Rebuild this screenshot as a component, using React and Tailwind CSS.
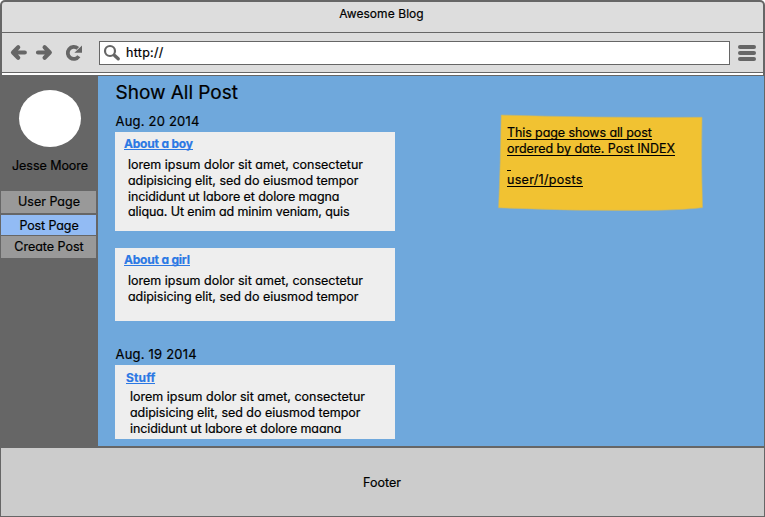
const LOREM = [
  { text: "lorem ipsum dolor sit amet, consectetur", tracking: "tracking-[0.01px]" },
  { text: "adipisicing elit, sed do eiusmod tempor", tracking: "tracking-[-0.03px]" },
  { text: "incididunt ut labore et dolore magna", tracking: "tracking-[-0.09px]" },
  { text: "aliqua. Ut enim ad minim veniam, quis", tracking: "tracking-[-0.1px]" },
];

function PostLink({ children, className }) {
  return (
    <div className="flex">
      <a className={`block h-[18px] whitespace-pre border-b border-[#2b78e4] text-[12px] leading-[23px] font-bold text-[#2b78e4] ${className}`}>
        {children}
      </a>
    </div>
  );
}

function Excerpt({ lines, className }) {
  return (
    <div className={`overflow-hidden ${className}`}>
      {lines.map(({ text, tracking }) => (
        <div key={text} className={`h-[15.75px] whitespace-pre leading-[16px] ${tracking}`}>{text}</div>
      ))}
    </div>
  );
}

function NoteLine({ children, className }) {
  return (
    <div className="flex">
      <span className={`block whitespace-pre border-b border-black leading-[18px] ${className}`}>{children}</span>
    </div>
  );
}

function Toolbar() {
  return (
    <div className="flex h-[40px] items-start border-b border-[#666]">
      <svg className="mt-[9px] ml-[6px] h-[22px] w-[78px] shrink-0" viewBox="0 0 78 22" fill="none" stroke="#666" strokeLinecap="round" strokeLinejoin="round">
        <path strokeWidth="4.200" d="M10.200 5.200 5 10.500 10.200 15.800M5.500 10.500h11.300" />
        <path strokeWidth="4.200" d="M36.600 5.200 41.800 10.500 36.600 15.800M41.300 10.500H30" />
        <path strokeWidth="3.800" strokeLinecap="butt" d="M70.800 14.200A6 6 0 1 1 69.800 6.400" />
        <path fill="#666" stroke="none" d="M74 3.600v7.200h-7.600z" />
      </svg>
      <div className="mt-2 ml-[13px] flex h-[24px] w-[631px] items-start border border-[#666] bg-white">
        <svg className="mt-[2px] ml-[3px] h-[18px] w-[18px]" viewBox="0 0 18 18" fill="none" stroke="#666">
          <circle cx="7" cy="7" r="5" strokeWidth="2.2" />
          <path strokeWidth="3.4" strokeLinecap="round" d="m11.6 11.6 3.6 3.2" />
        </svg>
        <span className="ml-[5px] leading-[22px] tracking-[0.3px]">http://</span>
      </div>
      <div className="mt-3 ml-2 flex w-[18px] flex-col gap-[2px]">
        <div className="h-1 rounded-full bg-[#666]" />
        <div className="h-1 rounded-full bg-[#666]" />
        <div className="h-1 rounded-full bg-[#666]" />
      </div>
    </div>
  );
}

function Sidebar() {
  return (
    <aside className="flex w-[98px] flex-col bg-[#666] pl-px">
      <div className="mt-[14px] ml-[18px] h-[57px] w-[62px] rounded-[50%] bg-white" />
      <div className="mt-[11px] h-4 w-[98px] text-center leading-4 tracking-[-0.05px] whitespace-pre">Jesse Moore</div>
      <nav className="mt-[17px] flex w-[95px] flex-col text-center">
        <a className="h-[22px] bg-[#999] pl-px leading-[22px]">User Page</a>
        <a className="mt-[2px] h-5 bg-[#92bbf4] pl-px leading-[22px] tracking-[-0.1px]">Post Page</a>
        <a className="mt-px h-[22px] bg-[#999] pl-px leading-[22px]">Create Post</a>
      </nav>
    </aside>
  );
}

function Note() {
  return (
    <div className="relative mt-[38px] ml-[103px] h-[98px] w-[206px]">
      <svg className="absolute inset-0 h-full w-full" viewBox="0 0 206 98">
        <path fill="#f1c232" stroke="#c9b767" strokeWidth="0.6" d="M3.2 1 Q100 4 204 3.3 Q203 50 204.5 93.6 Q190 95.5 160 96.3 Q80 97.5 .6 93.8 Q2.500 50 3.200 1Z" />
      </svg>
      <div className="relative pt-[10px] pl-[9px]">
        <NoteLine className="h-4 tracking-[-0.1px]">This page shows all post</NoteLine>
        <NoteLine className="h-4 tracking-[-0.04px]">ordered by date. Post INDEX</NoteLine>
        <NoteLine className="h-[15px]"> </NoteLine>
        <NoteLine className="h-4 tracking-[0.3px]">user/1/posts</NoteLine>
      </div>
    </div>
  );
}

export default function App() {
  return (
    <div className="h-[517px] w-[765px] overflow-hidden bg-white font-['Inter','Noto_Sans',sans-serif] text-[12.5px] text-black [-webkit-text-stroke:0.2px] [font-feature-settings:'cv11']">
      <div className="flex h-[517px] flex-col rounded-t-[5px] bg-[#666]">
        <header className="mx-[2px] mt-[2px] h-[73px] rounded-t-[3px] bg-[#ddd]">
          <div className="h-[31px] border-b border-[#666] pt-[3px] pr-[2px] text-center text-[12px] leading-[18px] tracking-[0.07px]">Awesome Blog</div>
          <Toolbar />
          <div className="h-[2px] bg-white" />
        </header>
        <div className="mt-px flex h-[370px]">
          <Sidebar />
          <main className="flex w-[666px] bg-[#6fa8dc]">
            <section className="w-[297px] pl-[17px]">
              <h1 className="mt-[5px] h-6 pl-[0.5px] text-[19px] leading-6 tracking-[-0.02px] whitespace-pre">Show All Post</h1>
              <h2 className="mt-[8px] h-4 pl-[0.5px] text-[13px] leading-4 tracking-[0.2px]">Aug. 20 2014</h2>
              <article className="mt-[3px] h-[99px] w-[280px] bg-[#eee] pl-[9px]">
                <PostLink className="tracking-[-0.2px]">About a boy</PostLink>
                <Excerpt lines={LOREM} className="mt-[7px] ml-[4px]" />
              </article>
              <article className="mt-[17px] h-[73px] w-[280px] bg-[#eee] pl-[9px]">
                <PostLink className="tracking-[-0.2px]">About a girl</PostLink>
                <Excerpt lines={LOREM.slice(0, 2)} className="mt-[7px] ml-[4px]" />
              </article>
              <h2 className="mt-[25px] h-4 pl-[0.5px] text-[13px] leading-4 tracking-[0.2px]">Aug. 19 2014</h2>
              <article className="mt-[3px] h-[74px] w-[280px] bg-[#eee] pt-px pl-[11px]">
                <PostLink className="tracking-[0.14px]">Stuff</PostLink>
                <Excerpt lines={LOREM.slice(0, 3)} className="mt-[5px] ml-[4px] h-[44px]" />
              </article>
            </section>
            <Note />
          </main>
        </div>
        <footer className="mx-px mt-[2px] h-[68px] bg-[#ccc] pt-[27px] pr-px text-center leading-4">Footer</footer>
      </div>
    </div>
  );
}
